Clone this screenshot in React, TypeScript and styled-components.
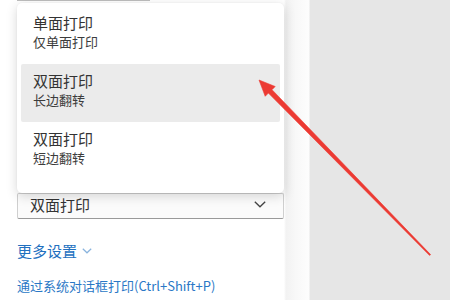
import React from "react";
import styled, { createGlobalStyle } from "styled-components";

const Global = createGlobalStyle`
  html, body { margin: 0; padding: 0; background: #e6e6e6; }
  body { font-family: "Noto Sans CJK SC", "Noto Sans", sans-serif; }
  * { box-sizing: border-box; }
`;

const Page = styled.div`
  position: relative;
  width: 450px;
  height: 300px;
  display: flex;
  overflow: hidden;
  background: #e6e6e6;
`;

const Panel = styled.div`
  width: 310px;
  height: 300px;
  flex: none;
  display: flex;
  flex-direction: column;
  align-items: flex-start;
  padding: 0 26px 0 17px;
  background: linear-gradient(
    to right,
    #ffffff 0px,
    #ffffff 284px,
    #f2f2f2 286px,
    #f8f8f8 296px,
    #fdfdfd 309px,
    #e6e6e6 310px
  );
`;

const PrevEdge = styled.div`
  width: 133px;
  height: 1px;
  background: #bdbdbd;
`;

const SelectWrap = styled.div`
  position: relative;
  margin-top: 192px;
  width: 267px;
`;

const SelectBox = styled.div`
  height: 26px;
  display: flex;
  align-items: center;
  justify-content: space-between;
  padding: 0 17px 3px 12px;
  border: 1px solid #cfcfcf;
  border-bottom-color: #9a9a9a;
  border-radius: 2px;
  background: #fbfbfb;
  color: #333;
  font-size: 15px;
  line-height: 20px;
`;

const Menu = styled.div`
  position: absolute;
  left: 0;
  bottom: 26px;
  width: 267px;
  padding: 3px 4px 13px;
  background: #fff;
  border-radius: 5px;
  box-shadow: 0 3px 12px rgba(0, 0, 0, 0.16), 0 0 2px rgba(0, 0, 0, 0.06);
  display: flex;
  flex-direction: column;
  z-index: 2;
`;

const Item = styled.div<{ $active?: boolean }>`
  height: 58px;
  padding: 7px 12px 0;
  display: flex;
  flex-direction: column;
  background: ${(p) => (p.$active ? "#ebebeb" : "transparent")};
  border-radius: 2px;
`;

const Title = styled.div`
  font-size: 15px;
  line-height: 20px;
  color: #333;
`;

const Sub = styled.div`
  font-size: 13px;
  line-height: 17px;
  color: #3c3c3c;
`;

const More = styled.div`
  margin-top: 22px;
  display: flex;
  align-items: center;
  gap: 5px;
  font-size: 15px;
  line-height: 20px;
  color: #2270bf;
`;

const Link = styled.div`
  margin-top: 16px;
  font-size: 13px;
  line-height: 17px;
  color: #2a78c6;
`;

const Overlay = styled.svg`
  position: absolute;
  left: 0;
  top: 0;
  pointer-events: none;
  z-index: 5;
`;

export default function App() {
  return (
    <>
      <Global />
      <Page>
        <Panel>
          <PrevEdge />
          <SelectWrap>
            <Menu>
              <Item>
                <Title>单面打印</Title>
                <Sub>仅单面打印</Sub>
              </Item>
              <Item $active>
                <Title>双面打印</Title>
                <Sub>长边翻转</Sub>
              </Item>
              <Item>
                <Title>双面打印</Title>
                <Sub>短边翻转</Sub>
              </Item>
            </Menu>
            <SelectBox>
              <span>双面打印</span>
              <svg width="12" height="7" viewBox="0 0 12 7">
                <polyline points="0.8,0.8 6,5.8 11.2,0.8" fill="none" stroke="#444" strokeWidth="1.3" />
              </svg>
            </SelectBox>
          </SelectWrap>
          <More>
            <span>更多设置</span>
            <svg width="10" height="6" viewBox="0 0 10 6">
              <polyline points="0.8,0.8 5,4.8 9.2,0.8" fill="none" stroke="#8ab4de" strokeWidth="1.2" />
            </svg>
          </More>
          <Link>通过系统对话框打印(Ctrl+Shift+P)</Link>
        </Panel>
        <Overlay width="450" height="300" viewBox="0 0 450 300">
          <polygon
            points="259,80 275.2,86.5 272,89.7 430.6,254.6 429.6,255.4 268.4,93.1 265.2,96.3"
            fill="#ec3a33"
            stroke="#ec3a33"
            strokeWidth="0.6"
            strokeLinejoin="round"
          />
        </Overlay>
      </Page>
    </>
  );
}
